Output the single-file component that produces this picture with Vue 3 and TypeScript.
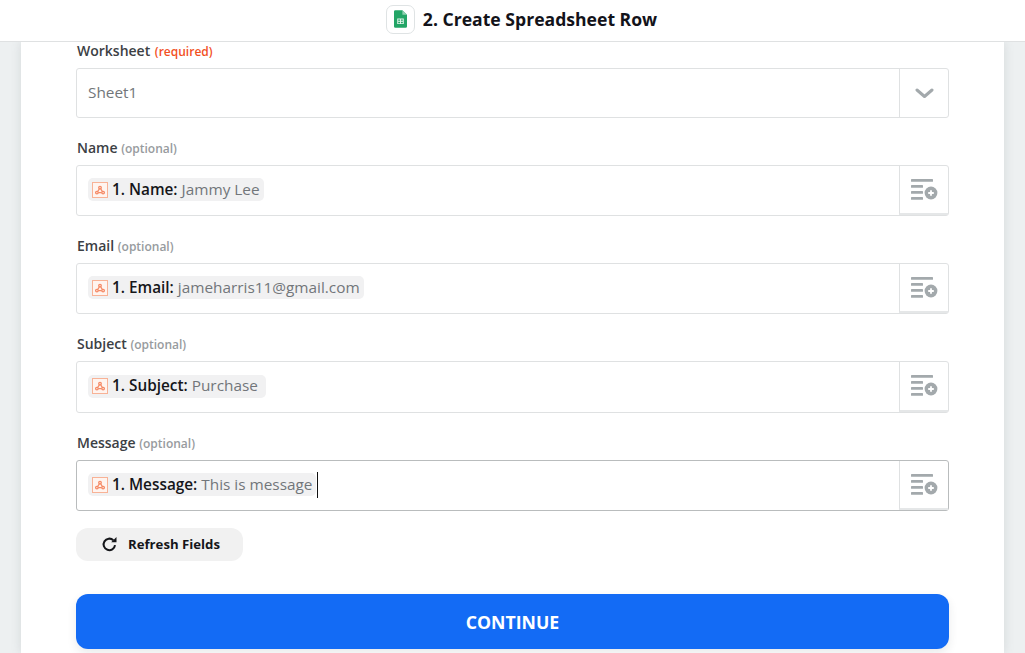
<script setup lang="ts">
interface Field {
  label: string;
  token: string;
  value: string;
  height: number;
  focused?: boolean;
}

const fields: Field[] = [
  { label: 'Name', token: '1. Name:', value: 'Jammy Lee', height: 51 },
  { label: 'Email', token: '1. Email:', value: 'jameharris11@gmail.com', height: 51 },
  { label: 'Subject', token: '1. Subject:', value: 'Purchase ', height: 52 },
  { label: 'Message', token: '1. Message:', value: 'This is message', height: 51, focused: true }
];
</script>

<template>
  <div class="page">
    <header class="topbar">
      <span class="app-icon">
        <svg width="13" height="18" viewBox="0 0 14 19">
          <path d="M1.5 0H9l5 5v12.5a1.5 1.5 0 0 1-1.5 1.5h-11A1.5 1.5 0 0 1 0 17.5v-16A1.5 1.5 0 0 1 1.5 0z" fill="#23a566" />
          <path d="M9 0l5 5H9z" fill="#8ed1b1" />
          <path d="M3.5 9h7v6h-7zM4.5 10v1.5h2V10zm3 0v1.5h2V10zm-3 2.5V14h2v-1.5zm3 0V14h2v-1.5z" fill="#e8f5ee" fill-rule="evenodd" />
        </svg>
      </span>
      <h1 class="title">2. Create Spreadsheet Row</h1>
    </header>

    <main class="card">
      <div class="field">
        <label class="label">Worksheet <span class="required">(required)</span></label>
        <div class="control select">
          <div class="control-body plain">Sheet1</div>
          <div class="control-side">
            <svg width="19" height="11" viewBox="0 0 19 11">
              <path d="M2 2l7.5 6.5L17 2" fill="none" stroke="#a3a9ac" stroke-width="3" stroke-linecap="round" stroke-linejoin="round" />
            </svg>
          </div>
        </div>
      </div>

      <div v-for="field in fields" :key="field.label" class="field">
        <label class="label">{{ field.label }} <span class="optional">(optional)</span></label>
        <div class="control" :class="{ focused: field.focused }" :style="{ height: field.height + 'px' }">
          <div class="control-body">
            <span class="pill">
              <span class="pill-icon">
                <svg width="16" height="16" viewBox="0 0 16 16">
                  <rect x="0.5" y="0.5" width="15" height="15" fill="#fff4ef" stroke="#f8b296" />
                  <g fill="none" stroke="#f58a66" stroke-width="1.3">
                    <circle cx="8" cy="5.6" r="1.3" />
                    <circle cx="4.9" cy="10.6" r="1.3" />
                    <circle cx="11.1" cy="10.6" r="1.3" />
                    <path d="M7.4 6.8L5.6 9.5M6.3 10.6h3.4M8.7 6.8l1.7 2.7" />
                  </g>
                </svg>
              </span>
              <b class="token">{{ field.token }}</b>&nbsp;<span class="value">{{ field.value }}</span>
            </span>
            <span v-if="field.focused" class="caret"></span>
          </div>
          <div class="control-side raised">
            <svg width="27" height="22" viewBox="0 0 27 22">
              <g fill="#a3a9ac">
                <rect x="0" y="0" width="22" height="2.8" rx="0.6" />
                <rect x="0" y="6" width="12" height="2.8" rx="0.6" />
                <rect x="0" y="12" width="12" height="2.8" rx="0.6" />
                <rect x="0" y="18" width="12" height="2.8" rx="0.6" />
                <circle cx="20" cy="14" r="6.4" />
              </g>
              <path d="M20 11.2v5.6M17.2 14h5.6" stroke="#fff" stroke-width="1.8" />
            </svg>
          </div>
        </div>
      </div>

      <button class="refresh" type="button">
        <svg width="17" height="17" viewBox="0 0 16 16">
          <path d="M13.2 8.6A5.4 5.4 0 1 1 11.6 4" fill="none" stroke="#15161a" stroke-width="1.9" />
          <path d="M9.6 5.9h5V0.9z" fill="#15161a" />
        </svg>
        <span>Refresh Fields</span>
      </button>

      <button class="continue" type="button">CONTINUE</button>
    </main>
  </div>
</template>

<style>
html,
body {
  margin: 0;
  background: #edf0f1;
  overflow: hidden;
}
</style>

<style scoped>
.page {
  height: 653px;
  overflow: hidden;
  display: flex;
  flex-direction: column;
  font-family: "Open Sans", "Liberation Sans", sans-serif;
  color: #2d2e2e;
}

.topbar {
  flex: none;
  position: relative;
  z-index: 1;
  height: 41px;
  background: #fff;
  border-bottom: 1px solid #dfe1e2;
  display: flex;
  align-items: center;
  justify-content: center;
  gap: 8px;
  padding-left: 18px;
}

.app-icon {
  width: 27px;
  height: 27px;
  border: 1px solid #dfe3e4;
  border-radius: 7px;
  display: flex;
  align-items: center;
  justify-content: center;
  margin-top: -3px;
}

.title {
  margin: -3px 0 0;
  font-size: 17.6px;
  font-weight: 700;
  line-height: 24px;
  color: #13131a;
}

.card {
  flex: 1;
  margin: 0 21px;
  padding: 0 55px;
  background: #fff;
  box-shadow: 0 0 10px rgba(90, 100, 105, 0.16);
}

.field {
  margin-bottom: 20px;
}

.label {
  display: block;
  height: 20px;
  line-height: 20px;
  margin-bottom: 7px;
  padding-left: 1px;
  font-size: 14px;
  font-weight: 600;
  color: #3c4044;
}

.field:first-child .label {
  margin-top: -1px;
}

.required,
.optional {
  font-size: 12px;
  font-weight: 600;
}

.required {
  color: #f2511f;
  margin-left: 1px;
}

.optional {
  color: #979b9e;
}

.control {
  height: 50px;
  box-sizing: border-box;
  display: flex;
  border: 1px solid #dfe1e2;
  border-radius: 3px;
  background: #fff;
}

.control.focused {
  border-color: #b9bcbd;
}

.control-body {
  flex: 1;
  min-width: 0;
  display: flex;
  align-items: center;
  padding-left: 11px;
  font-size: 15.35px;
}

.control-body.plain {
  color: #72767a;
  padding-bottom: 2px;
}

.control-side {
  flex: none;
  width: 49px;
  box-sizing: border-box;
  border-left: 1px solid #dfe1e2;
  display: flex;
  align-items: center;
  justify-content: center;
}

.control-side.raised {
  border-bottom: 2px solid #e5e7e8;
}

.pill {
  height: 23px;
  margin-top: -2px;
  display: inline-flex;
  align-items: center;
  padding-right: 4px;
  background: #f1f1f2;
  border-radius: 5px;
  white-space: pre;
  line-height: 20px;
}

.pill-icon {
  display: flex;
  margin: 0 4px;
}

.token {
  font-weight: 600;
  color: #15161a;
  margin-top: -2px;
}

.value {
  color: #72767a;
  margin-top: -2px;
}

.caret {
  width: 1px;
  height: 26px;
  background: #111;
  margin: -1px 0 0 1px;
}

.refresh {
  width: 167px;
  height: 33px;
  margin-top: -3px;
  display: flex;
  align-items: center;
  padding: 0 0 1px 25px;
  gap: 10px;
  border: 0;
  border-radius: 12px;
  background: #f1f1f1;
  font-family: inherit;
  font-size: 13.2px;
  font-weight: 700;
  color: #15161a;
}

.continue {
  display: block;
  width: 100%;
  height: 55px;
  margin-top: 33px;
  border: 0;
  border-radius: 12px;
  background: #136bf5;
  box-shadow: 0 4px 10px rgba(40, 50, 60, 0.1);
  font-family: inherit;
  font-size: 17.7px;
  font-weight: 700;
  color: #fff;
}
</style>
